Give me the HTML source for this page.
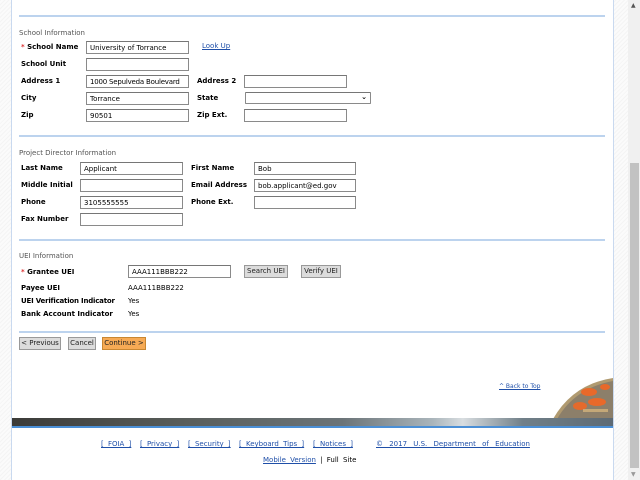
<!DOCTYPE html>
<html><head><meta charset="utf-8"><style>
*{margin:0;padding:0;box-sizing:border-box}
body{width:640px;height:480px;overflow:hidden;position:relative;font-family:"DejaVu Sans","Liberation Sans",sans-serif;font-size:7px;color:#000;
background:repeating-linear-gradient(135deg,#f4f4f4 0 1px,#fbfbfb 1px 3px);}
#main{position:absolute;left:11px;top:0;width:603px;height:480px;background:#fff;border-left:1px solid #c9d9ef;border-right:1px solid #c9d9ef;}
.a{position:absolute;white-space:nowrap}
.hr{position:absolute;left:19px;width:586px;height:2px;background:#bcd3ee}
.sec{color:#555;font-size:7px}
.l{font-weight:bold;font-size:7px}
.i{position:absolute;height:13px;border:1px solid #8a8a8a;border-top-color:#767676;background:#fff;font-size:7px;padding:1px 3px;line-height:10px;white-space:nowrap;overflow:hidden}
.star{color:#d33}
.btn{position:absolute;height:13px;border:1px solid #999;background:#dcdcdc;font-size:7px;text-align:center;line-height:11px;color:#222;white-space:nowrap;overflow:hidden}
a{color:#1f4fa8;text-decoration:underline}
.f{position:absolute;top:440px;font-size:7px;white-space:nowrap;word-spacing:2px}
#sb{position:absolute;left:628px;top:0;width:12px;height:480px;background:#f0f0f0}
#thumb{position:absolute;left:630px;top:163px;width:9px;height:305px;background:#c2c2c2}
</style></head><body>
<div id="main"></div>
<div class="hr" style="top:15px"></div>
<div class="a sec" style="left:19px;top:29px">School Information</div>
<div class="a l" style="left:21px;top:43px"><span class="star">*</span> School Name</div>
<div class="i" style="left:86px;top:41px;width:103px">University of Torrance</div>
<a class="a" style="left:202px;top:42px">Look Up</a>
<div class="a l" style="left:21px;top:60px">School Unit</div>
<div class="i" style="left:86px;top:58px;width:103px"></div>
<div class="a l" style="left:21px;top:77px">Address 1</div>
<div class="i" style="left:86px;top:75px;width:103px;letter-spacing:-0.2px">1000 Sepulveda Boulevard</div>
<div class="a l" style="left:197px;top:77px">Address 2</div>
<div class="i" style="left:244px;top:75px;width:103px"></div>
<div class="a l" style="left:21px;top:94px">City</div>
<div class="i" style="left:86px;top:92px;width:103px">Torrance</div>
<div class="a l" style="left:197px;top:94px">State</div>
<div class="i" style="left:245px;top:92px;width:126px;height:12px;border-radius:1px"><span style="position:absolute;right:3px;top:-1px;font-size:7px;font-weight:bold">&#8964;</span></div>
<div class="a l" style="left:21px;top:111px">Zip</div>
<div class="i" style="left:86px;top:109px;width:103px">90501</div>
<div class="a l" style="left:197px;top:111px">Zip Ext.</div>
<div class="i" style="left:244px;top:109px;width:103px"></div>

<div class="hr" style="top:135px"></div>
<div class="a sec" style="left:19px;top:149px">Project Director Information</div>
<div class="a l" style="left:21px;top:164px">Last Name</div>
<div class="i" style="left:80px;top:162px;width:103px">Applicant</div>
<div class="a l" style="left:191px;top:164px">First Name</div>
<div class="i" style="left:254px;top:162px;width:102px">Bob</div>
<div class="a l" style="left:21px;top:181px">Middle Initial</div>
<div class="i" style="left:80px;top:179px;width:103px"></div>
<div class="a l" style="left:191px;top:181px">Email Address</div>
<div class="i" style="left:254px;top:179px;width:102px">bob.applicant@ed.gov</div>
<div class="a l" style="left:21px;top:198px">Phone</div>
<div class="i" style="left:80px;top:196px;width:103px">3105555555</div>
<div class="a l" style="left:191px;top:198px">Phone Ext.</div>
<div class="i" style="left:254px;top:196px;width:102px"></div>
<div class="a l" style="left:21px;top:215px">Fax Number</div>
<div class="i" style="left:80px;top:213px;width:103px"></div>

<div class="hr" style="top:239px"></div>
<div class="a sec" style="left:19px;top:252px">UEI Information</div>
<div class="a l" style="left:21px;top:268px"><span class="star">*</span> Grantee UEI</div>
<div class="i" style="left:128px;top:265px;width:103px">AAA111BBB222</div>
<div class="btn" style="left:244px;top:265px;width:44px">Search UEI</div>
<div class="btn" style="left:301px;top:265px;width:40px">Verify UEI</div>
<div class="a l" style="left:21px;top:284px">Payee UEI</div>
<div class="a" style="left:128px;top:284px">AAA111BBB222</div>
<div class="a l" style="left:21px;top:297px;letter-spacing:-0.2px">UEI Verification Indicator</div>
<div class="a" style="left:128px;top:297px">Yes</div>
<div class="a l" style="left:21px;top:310px">Bank Account Indicator</div>
<div class="a" style="left:128px;top:310px">Yes</div>

<div class="hr" style="top:331px"></div>
<div class="btn" style="left:19px;top:337px;width:42px">&lt; Previous</div>
<div class="btn" style="left:68px;top:337px;width:28px">Cancel</div>
<div class="btn" style="left:102px;top:337px;width:44px;background:#f6aa55;border-color:#c98732">Continue &gt;</div>

<a class="a" style="left:499px;top:383px;font-size:6px">^ Back to Top</a>
<svg class="a" style="left:553px;top:378px" width="60" height="41" viewBox="0 0 60 41">
<path d="M0 41 Q20 6 60 0 L60 41 Z" fill="#b09a70"/>
<path d="M4 41 Q22 10 60 3 L60 41 Z" fill="#8c7f6a"/>
<ellipse cx="36" cy="14" rx="8" ry="4" fill="#e8692a"/>
<ellipse cx="44" cy="24" rx="9" ry="4" fill="#e8692a"/>
<ellipse cx="27" cy="28" rx="7" ry="4" fill="#e46a2c"/>
<ellipse cx="52" cy="9" rx="5" ry="3" fill="#e8692a"/>
<rect x="30" y="31" width="25" height="3" fill="#c4a878"/>
</svg>
<div class="a" style="left:12px;top:418px;width:601px;height:8px;background:linear-gradient(90deg,#3b3b38 0%,#5a5f5c 30%,#6b7478 55%,#aab5bb 70%,#d8dde0 75%,#707f88 85%,#5d6a74 100%)"></div>
<div class="a" style="left:12px;top:426px;width:601px;height:2px;background:#4a8fd6"></div>

<a class="f" style="left:101px">[ FOIA ]</a>
<a class="f" style="left:140px">[ Privacy ]</a>
<a class="f" style="left:188px">[ Security ]</a>
<a class="f" style="left:239px">[ Keyboard Tips ]</a>
<a class="f" style="left:313px">[ Notices ]</a>
<a class="f" style="left:376px;word-spacing:4px">© 2017 U.S. Department of Education</a>
<div class="a" style="left:263px;top:456px;font-size:7px;word-spacing:2px"><a>Mobile Version</a> | Full Site</div>

<div id="sb"></div><div id="thumb"></div>
<div class="a" style="left:631px;top:2px;font-size:6px;color:#555">&#9650;</div>
<div class="a" style="left:631px;top:471px;font-size:6px;color:#999">&#9660;</div>
</body></html>
